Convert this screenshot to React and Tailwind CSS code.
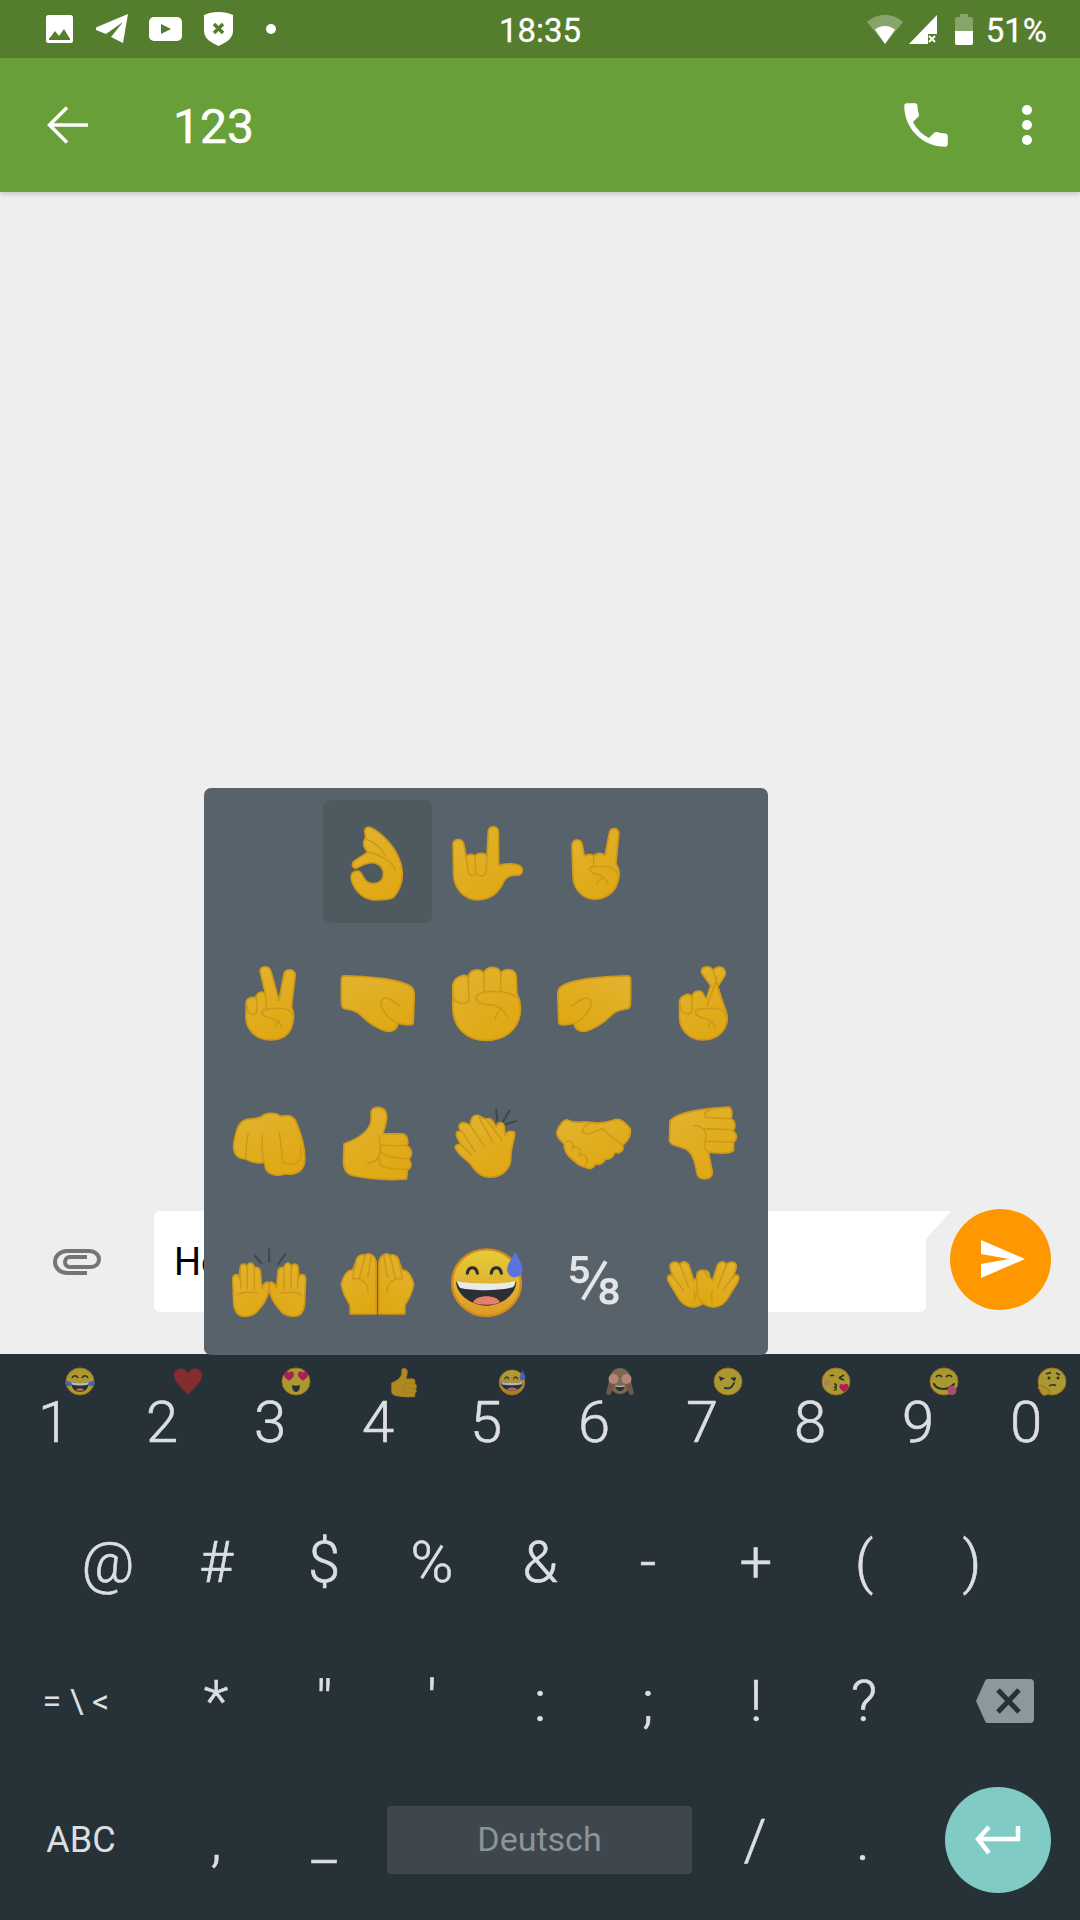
import React from "react";

const STROKE = "#cf9818";

function Em({ vx, vy = 4.5, vw = 240, w = 81, children }) {
  return (
    <svg width={w} height={80} viewBox={`${vx} ${vy} ${vw} 240`} preserveAspectRatio="none" className="overflow-visible">
      {children}
    </svg>
  );
}
const B = ({ d }) => <path d={d} fill="url(#handGrad)" stroke={STROKE} strokeWidth="5" strokeLinejoin="round" />;
const L = ({ d }) => <path d={d} fill="none" stroke={STROKE} strokeWidth="4.5" strokeLinecap="round" strokeLinejoin="round" />;
const Spark = ({ d }) => <path d={d} fill="none" stroke="#3d474e" strokeWidth="6" strokeLinecap="round" />;

const PUNCH = "M370 46 C430 46 540 55 570 80 C580 90 578 100 577 130 L575 185 C575 195 555 195 530 188 C528 205 515 215 495 212 C470 205 440 185 420 165 C405 148 385 147 372 145 C362 143 362 135 362 100 L362 60 C362 50 365 46 370 46 Z";
const PUNCHL = "M535 137 C515 118 490 105 482 118 C472 135 490 165 525 188";
const THUMB_BODY = "M370 130 C410 115 445 95 450 60 L450 35 C452 15 490 15 495 40 C500 60 490 80 485 100 L540 100 C560 100 562 130 555 135 C575 145 572 170 560 175 C572 185 570 205 558 207 L555 235 C500 240 440 235 395 225 C375 220 368 205 368 180 Z";
const THUMB_LINES = "M475 105 L475 130 C480 138 540 135 555 135 M478 135 C470 150 480 172 560 175 M475 175 C470 195 480 205 558 207 M440 188 C470 185 480 165 478 135";

function SweatFace() {
  return (
    <>
      <ellipse cx="790" cy="128" rx="102" ry="100" fill="url(#faceGrad)" stroke="#d8891c" strokeWidth="7" />
      <path d="M733 100 C736 78 760 78 763 100 M804 100 C807 78 831 78 834 100" fill="none" stroke="#2b2f33" strokeWidth="9" strokeLinecap="round" />
      <path d="M700 125 C750 135 830 135 878 125 C878 160 840 195 790 197 C740 195 700 160 700 125 Z" fill="#2b2f33" />
      <path d="M702 124 C750 133 830 133 876 124 C875 133 872 138 868 142 C830 153 750 153 712 144 C707 138 704 132 702 124 Z" fill="#e8eaea" />
      <path d="M750 187 C760 163 820 163 830 187 C815 197 765 197 750 187 Z" fill="#e87e6a" />
      <path d="M875 35 C885 55 897 75 897 87 C897 103 885 112 874 112 C862 112 851 103 851 87 C851 75 865 55 875 35 Z" fill="#5b73de" />
    </>
  );
}

const EMOJI = [
  [
    null,
    <Em vx={356} vw={243} w={81} key="ok">
      <B d="M452 20 C470 25 520 60 540 110 C558 150 556 190 530 225 C520 238 500 238 470 238 C440 238 410 215 400 180 C395 160 405 150 420 152 C428 154 432 165 438 175 C448 192 480 195 492 175 C500 160 495 135 470 128 C450 122 430 135 415 142 C402 146 398 130 408 122 C420 112 435 105 448 95 C440 85 432 70 438 58 C445 52 442 50 440 40 C436 28 442 20 452 20 Z" />
      <L d="M440 55 C470 65 490 85 500 105 M450 95 C480 100 520 120 532 150" />
    </Em>,
    <Em vx={672} vw={243} w={81} key="love">
      <B d="M712 57 C722 57 728 65 729 75 L735 108 C742 100 755 100 762 106 C770 96 790 96 798 105 L802 32 C802 15 832 15 832 32 L833 135 C850 128 880 128 895 135 C910 145 905 162 890 164 C870 165 860 165 850 180 C835 215 810 238 770 238 C730 238 700 205 698 165 L696 72 C696 62 704 57 712 57 Z" />
      <L d="M735 108 L742 155 C746 168 760 168 764 155 L762 106 M764 155 C768 170 790 170 795 155 L798 105" />
    </Em>,
    <Em vx={999} vw={243} w={81} key="horns">
      <B d="M1068 58 C1080 58 1083 68 1084 75 L1090 108 C1095 100 1112 100 1118 107 C1125 96 1145 96 1152 105 L1165 38 C1167 18 1195 20 1193 40 L1185 130 C1195 145 1198 165 1190 185 C1180 220 1150 236 1120 236 C1085 236 1058 205 1056 170 L1053 75 C1053 65 1060 58 1068 58 Z" />
      <L d="M1118 107 L1118 140 M1105 145 C1108 135 1125 138 1150 138 C1170 138 1190 150 1190 165 M1105 145 C1105 158 1125 160 1140 165 C1150 172 1160 180 1160 190 M1128 190 C1135 175 1145 170 1150 170" />
    </Em>,
    null,
  ],
  [
    <Em vx={24} key="v">
      <B d="M78 125 C78 115 92 108 105 112 C110 95 125 90 135 100 L120 35 C115 15 148 12 152 35 L175 120 L190 40 C195 22 225 25 223 45 L212 140 C218 150 220 170 215 190 C208 225 180 238 148 238 C105 238 78 205 77 170 Z" />
      <L d="M108 112 L110 150 C105 170 80 165 80 135 M135 100 L138 145 M125 155 C125 145 145 145 175 143 C195 143 213 150 216 165 M125 155 C125 170 150 172 165 178 C175 185 180 190 185 200 M163 198 C168 185 175 180 178 178" />
    </Em>,
    <Em vx={349} key="p1">
      <B d={PUNCH} />
      <L d={PUNCHL} />
    </Em>,
    <Em vx={667} key="fist">
      <B d="M690 75 C692 50 725 38 736 50 C738 28 770 20 782 38 C790 15 825 15 832 38 C845 20 878 25 878 50 L880 100 C888 115 892 135 890 155 C885 210 840 240 790 240 C730 240 690 200 690 140 Z" />
      <L d="M736 50 L738 125 M782 38 L782 95 M832 38 L832 95 M690 105 C695 130 730 135 738 120 M760 115 C755 100 780 92 830 92 C855 95 870 105 885 112 M760 115 C762 130 790 132 815 135 C830 140 845 155 852 170 M815 178 C820 160 830 145 836 140" />
    </Em>,
    <Em vx={992} key="p2">
      <g transform="translate(1581 0) scale(-1 1)">
        <B d={PUNCH} />
        <L d={PUNCHL} />
      </g>
    </Em>,
    <Em vx={1309} key="cross">
      <B d="M1358 125 C1358 105 1385 95 1395 108 C1400 88 1425 85 1430 105 L1438 115 L1450 75 L1425 40 C1415 20 1445 10 1458 30 C1470 10 1500 20 1492 45 L1470 80 L1495 150 C1500 165 1502 180 1495 195 C1485 225 1455 238 1425 238 C1385 238 1358 205 1358 170 Z" />
      <L d="M1458 30 L1490 140 M1470 50 L1440 135 M1395 108 L1395 150 C1392 165 1362 165 1360 135 M1405 155 C1405 145 1425 145 1455 143 C1475 143 1493 150 1496 165 M1405 155 C1405 170 1430 172 1445 178 C1455 185 1460 190 1465 200 M1443 198 C1448 185 1455 180 1458 178" />
    </Em>,
  ],
  [
    <Em vx={28} key="oncoming">
      <B d="M45 130 C50 100 55 70 75 60 C90 52 100 58 125 50 C140 35 170 35 185 48 C205 42 220 48 228 60 C245 100 258 150 255 185 C250 215 225 225 200 220 C180 228 150 225 140 205 L135 185 C115 190 95 185 80 175 C60 175 42 165 45 130 Z" />
      <L d="M88 100 C82 125 80 150 82 172 M130 100 C128 130 128 160 135 185 M180 95 C185 125 188 160 190 185 C210 195 240 195 245 165 L243 135" />
    </Em>,
    <Em vx={349} key="up">
      <B d={THUMB_BODY} />
      <L d={THUMB_LINES} />
    </Em>,
    <Em vx={670} key="clap">
      <Spark d="M822 28 L825 60 M862 30 L842 62 M880 62 L848 72" />
      <B d="M712 75 C720 60 735 68 745 75 C745 60 750 40 770 45 C785 55 790 58 795 55 C810 50 815 70 822 80 C825 65 840 62 845 75 L848 105 C855 90 875 88 877 100 C875 120 865 140 865 170 C865 205 840 230 800 230 C770 228 760 210 745 190 C725 170 705 160 700 140 C702 130 715 130 720 135 C710 120 700 105 705 95 C708 92 715 92 722 95 C712 85 710 80 712 75 Z" />
      <L d="M745 75 L785 135 M770 50 L812 125 M795 60 L840 120 M722 95 L760 155 M720 135 L750 165" />
    </Em>,
    <Em vx={992} key="shake">
      <B d="M1000 95 C1005 75 1025 50 1035 60 C1055 70 1075 62 1095 65 C1120 70 1150 65 1165 60 C1185 50 1200 62 1218 85 C1222 110 1205 125 1195 135 L1197 145 C1195 155 1180 160 1172 155 C1170 170 1155 178 1145 175 C1140 190 1125 195 1115 190 C1110 205 1095 208 1085 200 C1075 200 1060 190 1050 180 C1030 165 1020 150 1022 130 C1010 120 1000 110 1000 95 Z" />
      <L d="M1195 135 L1135 85 C1115 90 1095 105 1085 100 C1070 95 1075 80 1095 70 M1027 125 C1040 115 1055 130 1045 145 M1045 145 C1060 130 1080 150 1065 165 M1065 165 C1080 155 1100 175 1085 195" />
    </Em>,
    <Em vx={1309} key="down">
      <B d="M1330 60 C1350 40 1400 25 1505 20 C1515 25 1515 45 1510 55 C1525 60 1525 85 1515 90 C1530 100 1530 115 1518 125 L1518 150 C1510 160 1470 158 1445 155 C1445 175 1455 200 1455 220 C1450 240 1415 240 1410 220 C1405 190 1400 160 1375 145 C1350 135 1330 135 1328 120 Z" />
      <L d="M1435 50 L1510 55 M1435 50 C1430 35 1440 30 1450 28 M1432 85 L1515 88 M1435 122 L1518 125 M1400 75 C1430 75 1440 95 1435 120 M1445 155 C1430 148 1430 130 1435 122" />
    </Em>,
  ],
  [
    <Em vx={28} vy={6} key="raise">
      <Spark d="M150 28 V65 M108 48 L127 70 M197 43 L177 72" />
      {[0, 1].map((i) => (
        <g key={i} transform={i ? "translate(300 0) scale(-1 1)" : undefined}>
          <B d="M45 190 L42 115 C45 100 60 100 62 115 L64 85 C66 68 82 68 84 85 C86 62 104 66 106 85 C108 80 122 80 124 95 L128 145 C135 125 150 120 150 135 C150 170 135 190 118 210 C105 230 70 235 55 220 C48 210 45 200 45 190 Z" />
          <L d="M64 90 L66 145 M85 88 L85 145 M106 88 L106 150 M55 165 C70 155 90 155 115 160" />
        </g>
      ))}
    </Em>,
    <Em vx={349} key="palms">
      {[0, 1].map((i) => (
        <g key={i} transform={i ? "translate(938 0) scale(-1 1)" : undefined}>
          <B d="M465 65 C460 40 440 35 432 45 C420 38 405 50 405 65 L395 90 C385 85 370 100 362 130 C365 160 378 175 388 195 V220 H465 Z" />
          <L d="M432 45 L415 115 M450 45 L440 110 M405 65 L395 115 M395 115 C420 110 445 130 440 155" />
        </g>
      ))}
    </Em>,
    <Em vx={667} vy={6} key="sweat">
      <SweatFace />
    </Em>,
    <div key="frac" className="text-[#e3e5e6] text-[66px] leading-none font-normal">⅝</div>,
    <Em vx={1309} key="open">
      {[0, 1].map((i) => (
        <g key={i} transform={i ? "translate(2856 0) scale(-1 1)" : undefined}>
          <B d="M1322 112 C1325 100 1335 103 1340 110 C1335 95 1325 80 1332 70 C1340 60 1355 65 1360 75 C1362 62 1375 60 1385 72 L1400 120 L1420 100 C1422 85 1445 85 1447 105 L1447 150 C1445 175 1430 195 1400 200 C1375 200 1360 185 1350 165 C1340 145 1325 130 1322 112 Z" />
          <L d="M1340 110 L1370 150 M1360 75 L1385 140 M1400 150 C1405 165 1405 175 1400 185" />
        </g>
      ))}
    </Em>,
  ],
];

const FaceBase = () => <ellipse cx="15" cy="14.5" rx="14" ry="13.5" fill="#dfc02f" stroke="#c98a18" strokeWidth="1" />;
const Hint = ({ children, w = 30 }) => (
  <svg width={w} height={30} viewBox="0 0 30 30" className="overflow-visible">
    {children}
  </svg>
);

const HINTS = [
  <Hint key="1">
    <FaceBase />
    <path d="M7 11c1-3 5-3 6 0M17 11c1-3 5-3 6 0" fill="none" stroke="#2b2f33" strokeWidth="1.5" />
    <path d="M6 15c6 1.5 12 1.5 18 0 0 6-4 10-9 10s-9-4-9-10z" fill="#2b2f33" />
    <path d="M6 15c6 1.5 12 1.5 18 0l-.6 2.5c-5 1.3-11.800 1.300-16.800 0z" fill="#eee" />
    <path d="M11 23c2-2.500 6-2.500 8 0-2 1.500-6 1.500-8 0z" fill="#e87e6a" />
    <path d="M0 16c1-2 4-2 6-1l1 3c-2 2-6 1.500-7-2zM30 16c-1-2-4-2-6-1l-1 3c2 2 6 1.500 7-2z" fill="#4f78e8" />
  </Hint>,
  <Hint key="2">
    <path d="M15 28C10 22 1 15 1 8c0-8 11-9 14-1.500C18-1 29 0 29 8c0 7-9 14-14 20z" fill="#a82a2c" />
  </Hint>,
  <Hint key="3">
    <FaceBase />
    <path d="M8 14C6 12 2.500 10 3 7c.5-3 4-3 5-1 1-2 4.500-2 5 1 .5 3-3 5-5 7zM22 14c-2-2-5.500-4-5-7 .5-3 4-3 5-1 1-2 4.500-2 5 1 .5 3-3 5-5 7z" fill="#d81b60" />
    <path d="M11 18c2.500 1 5.500 1 8 0 0 4-1.500 7-4 7s-4-3-4-7z" fill="#2b2f33" />
  </Hint>,
  <Hint key="4">
    <svg x="0" y="-1" width="30" height="32" viewBox="349 4.500 240 240" preserveAspectRatio="none">
      <path d={THUMB_BODY} fill="#e3ab18" stroke={STROKE} strokeWidth="4" />
      <path d={THUMB_LINES} fill="none" stroke={STROKE} strokeWidth="5" />
    </svg>
  </Hint>,
  <Hint key="5">
    <svg x="0" y="0" width="30" height="30" viewBox="670 4.500 240 240">
      <SweatFace />
    </svg>
  </Hint>,
  <Hint key="6">
    <ellipse cx="15" cy="14" rx="11" ry="13" fill="#a07c5c" />
    <path d="M4 14l-3 13 4 1 5-10zM26 14l3 13-4 1-5-10z" fill="#8a6a50" />
    <circle cx="8.500" cy="12" r="5" fill="#e8a58c" />
    <circle cx="21.500" cy="12" r="5" fill="#e8a58c" />
    <path d="M10 18c3 1 7 1 10 0-.5 4-2.500 6-5 6s-4.500-2-5-6z" fill="#2b2f33" />
    <path d="M10 18c3 1 7 1 10 0l-.3 1.500c-3 .7-6.400.7-9.400 0z" fill="#eee" />
  </Hint>,
  <Hint key="7">
    <FaceBase />
    <path d="M6 10l4 1.500-3 1M18 11.500l5-.5" fill="none" stroke="#2b2f33" strokeWidth="1.500" />
    <circle cx="21" cy="12.500" r="1.500" fill="#2b2f33" />
    <circle cx="8" cy="12.500" r="1.300" fill="#2b2f33" />
    <path d="M12 21c3 1 7 0 9-5" fill="none" stroke="#2b2f33" strokeWidth="2" strokeLinecap="round" />
  </Hint>,
  <Hint key="8">
    <FaceBase />
    <path d="M9 9c1.500-1 3-1 4 0M18 11l5-3M18 11l5 2" fill="none" stroke="#2b2f33" strokeWidth="1.500" />
    <circle cx="6" cy="16" r="3" fill="#e89a70" />
    <path d="M13 17c3-.5 3 2 1 3 2 .5 2 3-1 3" fill="none" stroke="#2b2f33" strokeWidth="1.500" />
    <path d="M23 25c-3-2-5-4-4.500-6.500.5-2 3-2 4-.5 1-2 5-1.500 5 1 .5 2-2 4.500-4.500 6z" fill="#d81b60" />
  </Hint>,
  <Hint key="9">
    <FaceBase />
    <path d="M7 10c1.500-2.500 4.500-2.500 6 0M17 10c1.500-2.500 4.500-2.500 6 0" fill="none" stroke="#2b2f33" strokeWidth="1.500" />
    <path d="M5 17c3 6 14 7 20 0" fill="none" stroke="#2b2f33" strokeWidth="2" strokeLinecap="round" />
    <circle cx="23" cy="23.500" r="4.500" fill="#e0568a" />
  </Hint>,
  <Hint key="0">
    <FaceBase />
    <path d="M9 7l5-1.500M19 6l4 2" fill="none" stroke="#2b2f33" strokeWidth="1.500" />
    <circle cx="12" cy="11" r="1.500" fill="#2b2f33" />
    <circle cx="21" cy="11" r="1.500" fill="#2b2f33" />
    <path d="M12 19c2-1.500 5-1.500 7-.5" fill="none" stroke="#2b2f33" strokeWidth="1.500" />
    <path d="M1 20l3-2 8 5c1 4-3 6-6 5-2-1-3-4-5-8z" fill="#e6b828" stroke="#c98a18" strokeWidth="1" />
  </Hint>,
];

const KEY_TEXT = "text-[#dcdfe1] text-[58px] font-light [-webkit-text-stroke:0.6px_#dcdfe1] leading-none";

function StatusIcons() {
  return (
    <div className="flex items-center pl-[46px]">
      <svg width="27" height="28" viewBox="0 0 27 28">
        <rect width="27" height="28" rx="2.500" fill="#fff" />
        <path d="M3 24l6-8 4 5 5-7 6 10z" fill="#557d2e" />
        <rect x="3" y="23" width="21" height="2" fill="#557d2e" />
      </svg>
      <svg width="33" height="30" viewBox="0 0 33 30" className="ml-[23px]">
        <path d="M32 0L27 29 15 23 27 8 10 20 0 16c-1-1-1-2 1-3z" fill="#fff" strokeLinejoin="round" />
      </svg>
      <svg width="33" height="24" viewBox="0 0 33 24" className="ml-[20px]">
        <rect width="33" height="24" rx="5" fill="#fff" />
        <path d="M12 7l10 5-10 5z" fill="#557d2e" />
      </svg>
      <svg width="29" height="34" viewBox="0 0 29 34" className="ml-[22px]">
        <path d="M14.500 0C20 0 25 1 29 3v16c0 8-8 12-14.500 15C8 31 0 27 0 19V3C4 1 9 0 14.500 0z" fill="#fff" />
        <path d="M10 12l9 9M19 12l-9 9" stroke="#557d2e" strokeWidth="3.500" />
      </svg>
      <div className="ml-[33px] h-[10px] w-[10px] rounded-full bg-white" />
    </div>
  );
}

function StatusRight() {
  return (
    <div className="flex items-center justify-end pr-[33px]">
      <svg width="36" height="29" viewBox="0 0 36 29">
        <path d="M18 0C25 0 31 2.500 36 7L18 29 0 7C5 2.500 11 0 18 0z" fill="#fff" fillOpacity=".3" />
        <path d="M18 11c3.800 0 7.300 1.400 10 3.600L18 29 8 14.600C10.700 12.400 14.200 11 18 11z" fill="#fff" />
      </svg>
      <svg width="28" height="29" viewBox="0 0 28 29" className="ml-[6px]">
        <path d="M28 0v19H19v10H0z" fill="#fff" />
        <path d="M20 21l6 6M26 21l-6 6" stroke="#fff" strokeWidth="2" />
      </svg>
      <svg width="18" height="31" viewBox="0 0 18 31" className="ml-[18px]">
        <path d="M5 0h8v3h3a2 2 0 0 1 2 2v24a2 2 0 0 1-2 2H2a2 2 0 0 1-2-2V5a2 2 0 0 1 2-2h3z" fill="#fff" fillOpacity=".3" />
        <path d="M0 17h18v12a2 2 0 0 1-2 2H2a2 2 0 0 1-2-2z" fill="#fff" />
      </svg>
      <span className="ml-[13px] text-white text-[33px] [-webkit-text-stroke:0.3px_white] leading-none mt-[2px]">51%</span>
    </div>
  );
}

const Key = ({ children, className = "" }) => (
  <div className={`relative flex items-center justify-center w-[108px] ${KEY_TEXT} ${className}`}>{children}</div>
);

export default function App() {
  return (
    <div className="relative w-[1080px] h-[1920px] flex flex-col overflow-hidden bg-[#eeeeee] font-[Roboto,sans-serif]">
      <svg width="0" height="0" className="absolute">
        <defs>
          <linearGradient id="handGrad" x1="0" y1="0" x2="0.6" y2="1">
            <stop offset="0" stopColor="#e2b430" />
            <stop offset="1" stopColor="#e0a814" />
          </linearGradient>
          <linearGradient id="faceGrad" x1="0" y1="0" x2="0" y2="1">
            <stop offset="0" stopColor="#e4cd38" />
            <stop offset="1" stopColor="#dc9a28" />
          </linearGradient>
        </defs>
      </svg>

      <header className="relative z-10 shadow-[0_2px_5px_rgba(0,0,0,0.18)]">
        <div className="grid grid-cols-3 items-center h-[58px] bg-[#557d2e]">
          <StatusIcons />
          <span className="text-center text-white text-[33px] [-webkit-text-stroke:0.3px_white] leading-none mt-[2px]">18:35</span>
          <StatusRight />
        </div>
        <div className="flex items-center h-[134px] bg-[#689f38]">
          <svg width="41" height="38" viewBox="0 0 41 38" fill="none" stroke="#fff" strokeWidth="3.500" className="ml-[47px]">
            <path d="M41 19H3M20 1.500L2.500 19 20 36.500" />
          </svg>
          <span className="ml-[85px] text-white text-[48px] [-webkit-text-stroke:0.5px_white] leading-none mt-[3px]">123</span>
          <div className="ml-auto flex items-center pr-[48px]">
            <svg width="58" height="58" viewBox="0 0 24 24" fill="#fff">
              <path d="M6.620 10.790c1.440 2.830 3.760 5.140 6.590 6.590l2.200-2.200c.27-.27.67-.36 1.020-.24 1.120.37 2.330.57 3.570.57.55 0 1 .45 1 1V20c0 .55-.45 1-1 1-9.390 0-17-7.610-17-17 0-.55.45-1 1-1h3.500c.55 0 1 .45 1 1 0 1.250.2 2.450.57 3.570.11.35.03.74-.25 1.020l-2.200 2.200z" />
            </svg>
            <div className="ml-[67px] flex flex-col gap-[5px]">
              <div className="h-[10px] w-[10px] rounded-full bg-white" />
              <div className="h-[10px] w-[10px] rounded-full bg-white" />
              <div className="h-[10px] w-[10px] rounded-full bg-white" />
            </div>
          </div>
        </div>
      </header>

      <main className="flex-1 flex flex-col justify-end pb-[42px]">
        <div className="flex items-center h-[101px]">
          <svg width="48" height="28" viewBox="0 0 48 28" fill="none" stroke="#757575" strokeWidth="4" className="ml-[53px]">
            <path d="M34 25H14C7 25 2 20 2 14C2 8 7 3 14 3H36C42 3 46 7 46 11C46 16 42 19 37 19H17C14 19 12 17 12 14C12 11 14 9 17 9H34" />
          </svg>
          <div className="relative ml-[53px] w-[772px] h-[101px] bg-white rounded-l-[6px] rounded-br-[6px] flex items-center pl-[20px]">
            <span className="text-black text-[38px] leading-none">He</span>
            <svg width="25" height="28" viewBox="0 0 25 28" className="absolute top-0 left-full">
              <path d="M0 0H25L0 28z" fill="#fff" />
            </svg>
          </div>
          <div className="ml-[24px] -mt-[5px] w-[101px] h-[101px] rounded-full bg-[#ff9800] flex items-center justify-center">
            <svg width="44" height="38" viewBox="0 0 44 38" className="ml-[4px]">
              <path d="M0 0L44 19 0 38V24L28 19 0 14z" fill="#fff" />
            </svg>
          </div>
        </div>
      </main>

      <section className="h-[566px] bg-[#273238] flex flex-col">
        <div className="flex h-[136px]">
          {["1", "2", "3", "4", "5", "6", "7", "8", "9", "0"].map((k, i) => (
            <Key key={k}>
              {k}
              <div className="absolute top-[13px] left-[65px] h-[30px] w-[30px] opacity-[0.72]">{HINTS[i]}</div>
            </Key>
          ))}
        </div>
        <div className="flex h-[143px] pl-[54px]">
          {["@", "#", "$", "%", "&", "-", "+", "(", ")"].map((k) => (
            <Key key={k}>{k}</Key>
          ))}
        </div>
        <div className="flex h-[136px]">
          <Key className="w-[162px]! pr-[10px]">
            <span className="text-[34px] font-normal [-webkit-text-stroke:0px]">= \ &lt;</span>
          </Key>
          {["*", '"', "'", ":", ";", "!", "?"].map((k) => (
            <Key key={k}>{k}</Key>
          ))}
          <div className="flex-1 flex items-center pl-[58px]">
            <svg width="58" height="44" viewBox="0 0 58 44">
              <path d="M9 2a3 3 0 0 1 3-2h42a4 4 0 0 1 4 4v36a4 4 0 0 1-4 4H12a3 3 0 0 1-3-2L0 22z" fill="#8c979e" />
              <path d="M22 11l21 22M43 11L22 33" stroke="#273238" strokeWidth="5" />
            </svg>
          </div>
        </div>
        <div className="flex h-[151px] pb-[10px]">
          <Key className="w-[162px]!">
            <span className="text-[36px] font-normal [-webkit-text-stroke:0px]">ABC</span>
          </Key>
          <Key>,</Key>
          <Key>_</Key>
          <div className="flex items-center justify-center w-[305px] h-[68px] self-center ml-[9px] mr-[9px] rounded-[4px] bg-[#3e474e] text-[#8d9397] text-[34px]">Deutsch</div>
          <Key>/</Key>
          <Key>.</Key>
          <div className="flex-1 flex items-center">
            <div className="ml-[28px] w-[106px] h-[106px] rounded-full bg-[#80cbc4] flex items-center justify-center">
              <svg width="46" height="30" viewBox="0 0 46 30" fill="none" stroke="#fff" strokeWidth="4.500">
                <path d="M43 1V14H3M14 2L3 14 14 28" />
              </svg>
            </div>
          </div>
        </div>
      </section>

      <div className="absolute left-[204px] top-[788px] w-[564px] h-[567px] rounded-[7px] bg-[#57626a] pt-[12px] px-[10px]">
        <div className="grid grid-cols-5 auto-rows-[123px] gap-y-[17px]">
          {EMOJI.flat().map((e, i) => (
            <div key={i} className={`flex items-center justify-center rounded-[8px] ${i === 1 ? "bg-[#4f5a60]" : ""}`}>
              {e}
            </div>
          ))}
        </div>
      </div>
    </div>
  );
}
